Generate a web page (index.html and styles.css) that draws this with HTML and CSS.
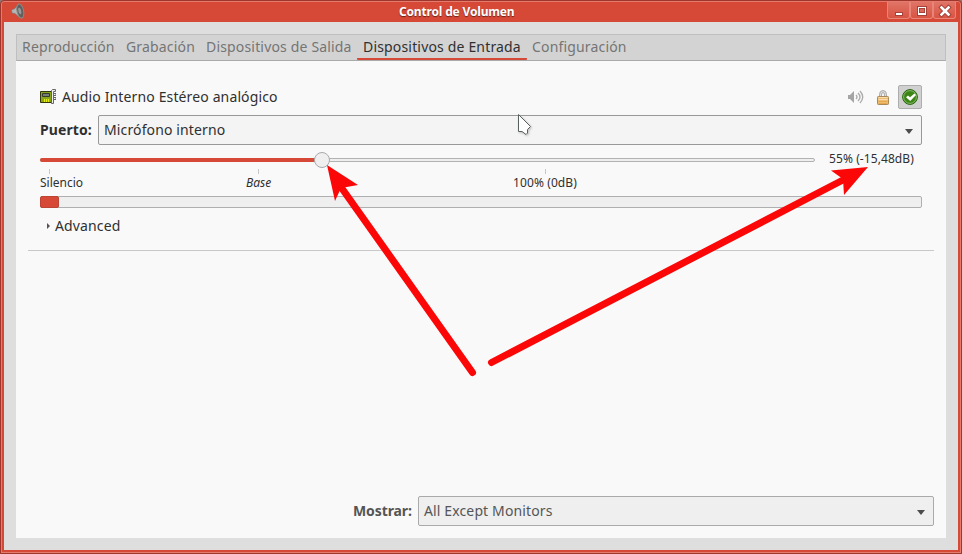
FILE: index.html
```html
<!DOCTYPE html>
<html lang="es">
<head>
<meta charset="utf-8">
<title>Control de Volumen</title>
<link rel="stylesheet" href="styles.css">
</head>
<body>
<div class="window">
  <header class="titlebar">
    <svg class="app-icon" width="14" height="17" viewBox="0 0 14 17"><path d="M.5 7 4 5.500 7.500.8 10.500 15.500 8 14 4 10.500 1 10Z" fill="#b5b5b5" stroke="#777" stroke-width=".6"/><ellipse cx="9.300" cy="8" rx="3.300" ry="7.200" transform="rotate(-12 9.300 8)" fill="#62605f" stroke="#8b8b89"/><ellipse cx="8.800" cy="8" rx="1.400" ry="3.300" transform="rotate(-12 8.800 8)" fill="#9a9a98"/></svg>
    <span class="title">Control de Volumen</span>
    <div class="controls">
      <button class="control"><svg width="22" height="16"><rect x="7.500" y="10.500" width="7" height="3" fill="#fff" stroke="#a54239"/></svg></button>
      <button class="control"><svg width="22" height="16"><rect x="6.500" y="4.500" width="9" height="9" fill="#fff" stroke="#a54239"/><rect x="8.500" y="6.500" width="5" height="4" fill="#dc675a" stroke="#a54239"/></svg></button>
      <button class="control"><svg width="22" height="16"><path d="m7.500 5.500 7 7M14.500 5.500 7.500 12.500" stroke="#a54239" stroke-width="4.500" stroke-linecap="square"/><path d="m7.500 5.500 7 7M14.500 5.500 7.500 12.500" stroke="#fff" stroke-width="2.500" stroke-linecap="square"/></svg></button>
    </div>
  </header>
  <main class="notebook">
    <nav class="tabs">
      <span class="tab t1">Reproducción</span><span class="tab t2">Grabación</span><span class="tab t3">Dispositivos de Salida</span><span class="tab t4 active">Dispositivos de Entrada</span><span class="tab t5">Configuración</span>
    </nav>
    <section class="device">
      <div class="device-head">
        <svg class="card" width="16" height="15" viewBox="0 0 16 15"><path d="M.5 2.500h12v11H.5Z" fill="#8aa51c" stroke="#33380c"/><path d="M2.500 4.500h7v3h-7Z" fill="#777e79" stroke="#343d2c"/><path d="M4.500 10v3M6.500 10v3M8.500 10v3" stroke="#e9f217"/><path d="M11.500 14.500V1.500L12.500.5H15.500V2.500H13.500V14.500Z" fill="#eee" stroke="#666"/><path d="M14 4.500h2v2h-2M14 8.500h2v2h-2" fill="none" stroke="#666"/></svg>
        <span class="device-name">Audio Interno Estéreo analógico</span>
        <svg class="speaker" width="16" height="14" viewBox="0 0 16 14"><path d="M0 5h2l4-4v12L2 9H0Z" fill="#a5a5a5"/><path d="M8 5q2 2 0 4M10 3q4 4 0 8M12 1q5.500 6 0 12" fill="none" stroke="#aaa" stroke-width="1.300"/></svg>
        <svg class="lock" width="12" height="15" viewBox="0 0 12 15"><path d="M2.500 8V4.500Q2.500.5 6 .5T9.500 4.500V8H7.500V5Q7.500 2.500 6 2.500T4.500 5v3Z" fill="#ddd" stroke="#aaa"/><rect x=".5" y="6.500" width="11" height="8" rx=".8" fill="#eebd70" stroke="#a98958"/><path d="M1.500 7.500h9M1.500 9.500h9" stroke="#f9dbad"/><path d="M1.500 11.500h9M1.500 13.500h9" stroke="#e5a84e"/></svg>
        <button class="default"><svg width="16" height="16" viewBox="0 0 16 16"><circle cx="8" cy="8" r="7.400" fill="#3c8515" stroke="#25680c"/><circle cx="8" cy="8" r="6.400" fill="none" stroke="#9cc486" stroke-width=".8"/><path d="M4 8.300 6 6.600 8 8.200 12.500 4.500 14 6 8.200 12Z" fill="#fff"/></svg></button>
      </div>
      <div class="port"><b class="port-label">Puerto:</b><div class="select port-select"><span class="port-value">Micrófono interno</span><svg class="caret" width="8" height="5"><path d="M0 0h8L4 5Z"/></svg></div></div>
      <div class="volume">
        <div class="track"><div class="fill"></div><div class="knob"></div></div>
        <span class="volume-value">55% (-15,48dB)</span>
      </div>
      <div class="marks">
        <div class="mark silence"><i></i><span class="s1">Silencio</span></div>
        <div class="mark base"><i></i><em class="s2">Base</em></div>
        <div class="mark full"><i></i><span class="s3">100% (0dB)</span></div>
      </div>
      <div class="meter"><div class="level"></div></div>
      <div class="advanced"><svg width="3" height="6"><path d="M0 0 3 3 0 6Z" fill="#555"/></svg><span class="adv-label">Advanced</span></div>
    </section>
    <footer class="filter"><b class="show-label">Mostrar:</b><div class="select show-select"><span class="show-value">All Except Monitors</span><svg class="caret" width="8" height="5"><path d="M0 0h8L4 5Z"/></svg></div></footer>
  </main>
</div>
<svg class="overlay" width="962" height="554" viewBox="0 0 962 554">
  <g stroke="#fb0707" stroke-width="7" stroke-linecap="round"><path d="M472.500 372.500 342 188.500M491.500 362.500 842 180.500"/></g>
  <g fill="#fb0707"><path d="M327 165 358 185 341 188 335 201Z"/><path d="M868 167 831 170.500 843 179 844 195Z"/></g>
  <path class="pointer" d="M518.500 114.500V131.500H522L526 134.500 527.500 133V129.500L530.500 126.500Z" fill="#fff" stroke="#59615f"/>
</svg>
</body>
</html>
```
FILE: styles.css
```css
* { box-sizing: border-box; }
body { margin: 0; overflow: hidden; font: 14px/20px "Noto Sans", "Open Sans", sans-serif; color: #303030; background: #8d7775; }
button { padding: 0; margin: 0; }
svg { display: block; flex: none; }
.window { width: 962px; height: 554px; border: 1px solid #9d372d; border-radius: 4px 4px 0 0; background: #d64937; padding: 0 3px 3px; box-shadow: inset 0 0 0 1px #e67b6d; display: flex; flex-direction: column; }
.titlebar { height: 21px; flex: none; position: relative; display: flex; justify-content: center; }
.app-icon { position: absolute; left: 7px; top: 2px; }
.title { width: 116px; margin-right: 48px; color: #fff; font-size: 12px; line-height: 21px; font-weight: 700; letter-spacing: -.17px; text-shadow: 0 1px 1px #6e211b; white-space: nowrap; }
.controls { position: absolute; right: 2px; top: 1px; display: flex; }
.control { width: 23px; height: 17px; border: 1px solid #e98578; border-top: 0; border-radius: 0 0 3px 3px; background: linear-gradient(#df7467, #d95443); }
.notebook { flex: 1; border: 12px solid #dedede; background: #f9f9f9; display: flex; flex-direction: column; }
.tabs { height: 27px; border: 1px solid #bfbfbf; border-bottom-color: #a9a9a9; background: #d3d3d3; color: #757575; display: flex; white-space: nowrap; }
.tab { line-height: 23px; padding-left: 5px; height: 25px; letter-spacing: .17px; }
.t1 { width: 104px; } .t2 { width: 80px; } .t3 { width: 156px; } .t4 { width: 170px; padding-left: 6px; }
.active { color: #303030; border-bottom: 2px solid #d64937; border-radius: 1px; }
.device { margin: 0 12px; padding: 0 12px; height: 190px; border-bottom: 1px solid #c8c8c8; }
.device-head { height: 48px; padding-top: 24px; display: flex; align-items: center; }
.card { margin-top: -2px; }
.device-name { margin-left: 6px; flex: 1; line-height: 24px; letter-spacing: .13px; white-space: nowrap; }
.speaker { margin-right: 13px; }
.lock { margin-right: 9px; }
.default { width: 24px; height: 24px; border: 1px solid #adadad; border-radius: 2px; background: #d0d0d0; display: flex; align-items: center; justify-content: center; }
.port { margin-top: 6px; display: flex; align-items: center; height: 30px; }
.port-label { width: 58px; white-space: nowrap; letter-spacing: .1px; }
.port-value, .show-value, .adv-label { letter-spacing: .13px; }
.select { flex: 1; height: 30px; border: 1px solid #999; border-radius: 2px; background: #f4f4f4; padding: 0 8px 0 5px; display: flex; align-items: center; justify-content: space-between; white-space: nowrap; }
.caret { fill: #4c4c4c; margin-top: 2px; }
.volume { height: 30px; display: flex; align-items: center; font-size: 12px; }
.track { width: 775px; height: 4px; border: 1px solid #b2b2b2; border-radius: 2px; background: #efefef; position: relative; }
.fill { width: 281px; height: 4px; margin: -1px; border-radius: 2px; background: #d64937; }
.knob { position: absolute; left: 273px; top: -7px; width: 16px; height: 16px; border: 1px solid #aaa; border-radius: 50%; background: #efefef; }
.volume-value { margin-left: 14px; white-space: nowrap; margin-top: -2px; letter-spacing: .08px; }
.marks { height: 21px; margin-top: -6px; display: grid; grid-template-columns: 206px 267px 70px; font-size: 12px; white-space: nowrap; }
.mark i { display: block; width: 1px; height: 5px; background: #c7c7c7; margin-left: 9px; }
.mark span, .mark em { display: block; line-height: 18px; }
.s3 { letter-spacing: .1px; }
.base i { margin-left: 12px; } .full i { margin-left: 32px; }
.meter { margin-top: 6px; height: 12px; border: 1px solid #afafaf; border-radius: 2px; background: #efefef; }
.level { width: 19px; height: 12px; margin: -1px; background: #d64937; border: 1px solid #bd4434; border-radius: 2px; }
.advanced { margin: 8px 0 0 7px; height: 20px; display: flex; align-items: center; }
.adv-label { margin-left: 5px; }
.filter { margin: auto 12px 12px 337px; height: 30px; display: flex; align-items: center; color: #555; }
.show-label { width: 65px; white-space: nowrap; letter-spacing: -.1px; }
.show-select { background: #efefef; border-color: #aaa; }
.overlay { position: absolute; left: 0; top: 0; pointer-events: none; }
.pointer { filter: drop-shadow(1px 1px 1px #bbb); }
```
